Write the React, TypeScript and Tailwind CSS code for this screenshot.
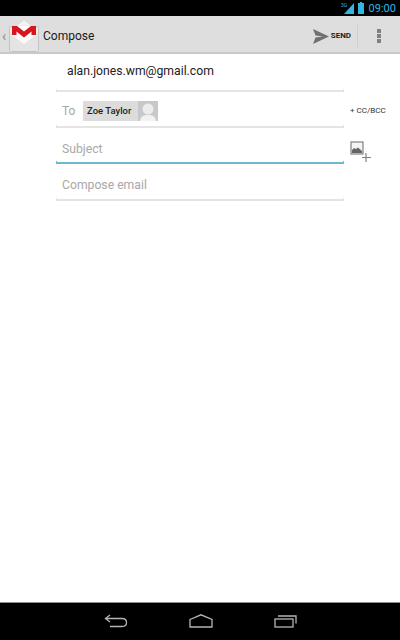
const font = "font-['Roboto',sans-serif]";

// underline of an Android Holo text field, with the small ticks at both ends
const Underline = ({ active }: { active?: boolean }) => (
  <div
    className={
      active
        ? "h-[3px] border-x border-b-2 border-[#6cb9d0]"
        : "h-[3px] border-x border-b-2 border-[#e4e4e4]"
    }
  />
);

const GmailIcon = () => (
  <svg width="30" height="32" viewBox="0 0 30 32" className="shrink-0">
    <path d="M15 0 L23 6 L7 6 Z" fill="#f4f4f4" stroke="#d4d4d4" strokeWidth="0.5" />
    <rect x="0.5" y="6.5" width="29" height="25" rx="1.5" fill="#ececec" stroke="#c4c4c4" />
    <path d="M1 12 L15 24 L29 12 L29 31 L1 31 Z" fill="#e4e4e4" />
    <path d="M3 6 L27 6 L27 15 L15 24 L3 15 Z" fill="#fbfbfb" />
    <path
      d="M3 6 L8 6 L15 11.5 L22 6 L27 6 L27 15 L22.5 15 L22.5 11.5 L15 17.5 L7.5 11.5 L7.5 15 L3 15 Z"
      fill="#d8141c"
    />
  </svg>
);

const SendIcon = () => (
  <svg width="16" height="15" viewBox="0 0 16 15">
    <path d="M0 0 L16 7.5 L0 15 L2.5 8.5 L10 7.5 L2.5 6.5 Z" fill="#707070" />
  </svg>
);

const AttachIcon = () => (
  <svg width="22" height="22" viewBox="0 0 22 22">
    <rect x="1" y="1" width="12" height="12" fill="#f4f4f4" stroke="#808080" strokeWidth="1.2" />
    <path d="M2 12 L2 9 L4 7 L6 8 L8 6.5 L12 10 L12 12 Z" fill="#666" />
    <path d="M16 12 V21 M12 16.5 H21" stroke="#808080" strokeWidth="1.2" fill="none" />
  </svg>
);

const Avatar = () => (
  <svg width="20" height="20" viewBox="0 0 20 20" className="block">
    <rect width="20" height="20" fill="#c8c8c8" />
    <circle cx="10" cy="8" r="5.5" fill="#ececec" />
    <path d="M2 20 C2.5 15 6 14 10 14 C14 14 17.5 15 18 20 Z" fill="#f2f2f2" />
  </svg>
);

const BackIcon = () => (
  <svg width="24" height="14" viewBox="0 0 24 14" fill="none" stroke="#b5b5b5" strokeWidth="1.3">
    <path d="M6 1 L1.5 4.5 L6 8" />
    <path d="M1.5 4.5 H18 C21 4.5 22.5 6.5 22.5 8.5 C22.5 11 21 12.5 18 12.5 H6" />
  </svg>
);

const HomeIcon = () => (
  <svg width="24" height="14" viewBox="0 0 24 14" fill="none" stroke="#b5b5b5" strokeWidth="1.3">
    <path d="M1 5.5 L12 0.8 L23 5.5 V13 H1 Z" />
  </svg>
);

const RecentIcon = () => (
  <svg width="23" height="14" viewBox="0 0 23 14" fill="none" stroke="#b5b5b5" strokeWidth="1.3">
    <rect x="1" y="5" width="18" height="8" />
    <path d="M4 2 H22 V9.5" />
  </svg>
);

export default function App() {
  return (
    <div className={`${font} flex h-[640px] w-[400px] flex-col bg-white`}>
      {/* status bar */}
      <div className="flex h-4 items-center justify-end bg-black pr-[4px]">
        <svg width="14" height="12" viewBox="0 0 14 12" className="mr-[3px]">
          <path d="M13 1 V12 H3 Z" fill="#33b5e5" />
          <text x="0" y="5" fontSize="5" fill="#33b5e5">3G</text>
        </svg>
        <svg width="6" height="12" viewBox="0 0 6 12" className="mr-[5px]">
          <path d="M2 0 H4 V1 H6 V12 H0 V1 H2 Z" fill="#33b5e5" />
        </svg>
        <span className="text-[11px] leading-none text-[#33b5e5]">09:00</span>
      </div>

      {/* action bar */}
      <div className="flex h-[38px] items-center border-b-2 border-[#c9c9c9] bg-[#dedede] pt-[4px]">
        <span className="ml-[2px] w-[7px] text-[14px] leading-none text-[#8a8a8a]">‹</span>
        <GmailIcon />
        <span className="ml-[4px] text-[12px] text-[#1a1a1a]">Compose</span>
        <div className="ml-auto flex items-center gap-[2px]">
          <SendIcon />
          <span className="text-[8px] font-bold text-[#222]">SEND</span>
        </div>
        <div className="ml-[6px] h-[22px] w-px bg-[#cfcfcf]" />
        <div className="ml-[19px] mr-[19px] flex flex-col gap-[1px]">
          <div className="size-[4px] bg-[#808080]" />
          <div className="size-[4px] bg-[#808080]" />
          <div className="size-[4px] bg-[#808080]" />
        </div>
      </div>

      {/* compose form */}
      <div className="flex flex-1 items-start pl-[56px] pt-[1px]">
        <div className="flex w-[288px] flex-col">
          <div className="flex h-[37px] flex-col">
            <div className="flex-1 pl-[11px] pt-[6px] text-[12.2px] leading-[20px] text-[#222]">
              alan.jones.wm@gmail.com
            </div>
            <Underline />
          </div>
          <div className="flex h-[36px] flex-col">
            <div className="flex flex-1 items-center pl-[6px] pt-[5px]">
              <span className="w-[21px] text-[12px] text-[#a8a8a8]">To</span>
              <div className="flex h-[20px] w-[75px] items-center justify-between bg-[#dcdcdc] pl-[4px]">
                <span className="text-[9.5px] font-medium text-[#222]">Zoe Taylor</span>
                <Avatar />
              </div>
            </div>
            <Underline />
          </div>
          <div className="flex h-[36px] flex-col">
            <div className="flex-1 pl-[6px] pt-[12px] text-[12.2px] leading-[18px] text-[#a8a8a8]">
              Subject
            </div>
            <Underline active />
          </div>
          <div className="flex h-[37px] flex-col">
            <div className="flex-1 pl-[6px] pt-[12px] text-[12.2px] leading-[18px] text-[#a8a8a8]">
              Compose email
            </div>
            <Underline />
          </div>
        </div>

        {/* cc/bcc and attachment */}
        <div className="ml-[6px] flex flex-col">
          <span className="mt-[50px] text-[8px] leading-[12px] text-[#333]">+ CC/BCC</span>
          <div className="mt-[24px]">
            <AttachIcon />
          </div>
        </div>
      </div>

      {/* nav bar */}
      <div className="flex h-[38px] items-center justify-center gap-[61px] border-t border-[#8c8c8c] bg-black pb-[1px]">
        <BackIcon />
        <HomeIcon />
        <RecentIcon />
      </div>
    </div>
  );
}
